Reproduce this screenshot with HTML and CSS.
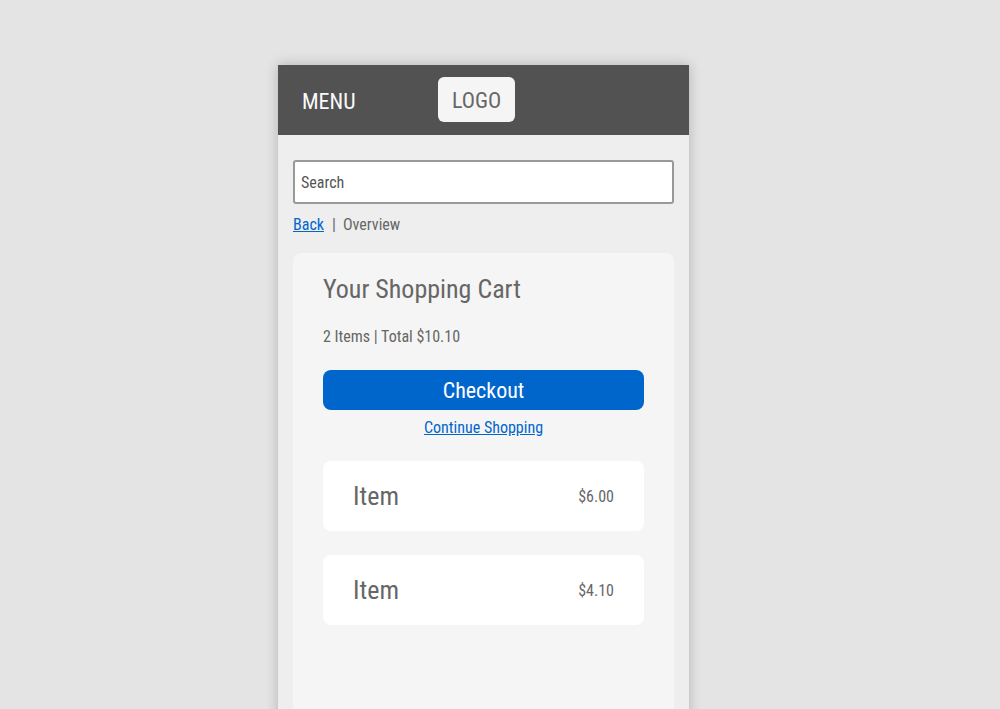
FILE: index.html
```html
<!DOCTYPE html>
<html lang="en">
<head>
<meta charset="utf-8">
<title>Shopping Cart</title>
<link rel="stylesheet" href="styles.css">
</head>
<body>
  <div class="phone">
    <header class="topbar">
      <span class="menu">MENU</span>
      <span class="logo">LOGO</span>
    </header>
    <main class="content">
      <div class="search"><span class="placeholder">Search</span></div>
      <nav class="crumbs"><a href="#" class="link">Back</a><span class="sep">|</span><span class="here">Overview</span></nav>
      <section class="cart">
        <h1 class="title">Your Shopping Cart</h1>
        <p class="summary">2 Items | Total $10.10</p>
        <button class="checkout">Checkout</button>
        <div class="continue"><a href="#" class="link">Continue Shopping</a></div>
        <div class="items">
          <div class="item"><span class="name">Item</span><span class="price">$6.00</span></div>
          <div class="item"><span class="name">Item</span><span class="price">$4.10</span></div>
        </div>
      </section>
    </main>
  </div>
</body>
</html>
```

FILE: styles.css
```css
* { box-sizing: border-box; }
html, body { margin: 0; height: 100%; }
body {
  background: #e4e4e4;
  font-family: "Roboto Condensed", "Roboto", "Liberation Sans", sans-serif;
  font-stretch: condensed;
  overflow: hidden;
  padding-top: 65px;
}
.phone {
  width: 411px;
  margin: 0 0 0 278px;
  height: 700px;
  background: #eeeeee;
  box-shadow: 0 0 12px rgba(0,0,0,0.22);
  display: flex;
  flex-direction: column;
}
.topbar {
  height: 70px;
  background: #525252;
  display: flex;
  align-items: flex-start;
  padding-left: 24px;
  padding-top: 12px;
}
.menu {
  color: #fafafa;
  font-size: 22px;
  width: 136px;
  line-height: 26px;
  margin-top: 12px;
}
.logo {
  width: 77px;
  height: 45px;
  background: #f5f5f5;
  border-radius: 6px;
  color: #666;
  font-size: 22px;
  display: flex;
  align-items: center;
  justify-content: center;
  padding-top: 2px;
}
.content {
  padding: 25px 15px 0;
  flex: 1;
  display: flex;
  flex-direction: column;
}
.search {
  height: 44px;
  background: #fff;
  border: 2px solid #999;
  border-radius: 3px;
  display: flex;
  align-items: center;
  padding-left: 6px;
}
.placeholder { color: #555; font-size: 16px; }
.crumbs {
  margin-top: 11px;
  font-size: 16px;
  color: #666;
  display: flex;
  align-items: center;
  height: 18px;
}
.sep { margin: 0 7px 0 8px; }
.link { color: #0066cc; text-decoration: underline; }
.cart {
  margin-top: 20px;
  flex: 1;
  background: #f5f5f5;
  border-radius: 8px;
  padding: 20px 30px 0;
}
.title {
  margin: 0;
  font-weight: 400;
  font-size: 26px;
  color: #666;
  line-height: 32px;
}
.summary {
  margin: 22px 0 0;
  font-size: 16px;
  color: #666;
  line-height: 20px;
}
.checkout {
  display: block;
  margin-top: 23px;
  width: 100%;
  height: 40px;
  border: none;
  border-radius: 8px;
  background: #0066cc;
  color: #fff;
  font-family: inherit;
  font-stretch: condensed;
  font-size: 22px;
  padding: 0;
}
.continue {
  text-align: center;
  font-size: 16px;
  margin-top: 9px;
  line-height: 18px;
}
.items {
  margin-top: 24px;
  display: flex;
  flex-direction: column;
  gap: 24px;
}
.item {
  height: 70px;
  background: #fff;
  border-radius: 8px;
  display: flex;
  align-items: center;
  justify-content: space-between;
  padding: 0 30px;
}
.name { font-size: 26px; color: #666; }
.price { font-size: 16px; color: #666; }
```
